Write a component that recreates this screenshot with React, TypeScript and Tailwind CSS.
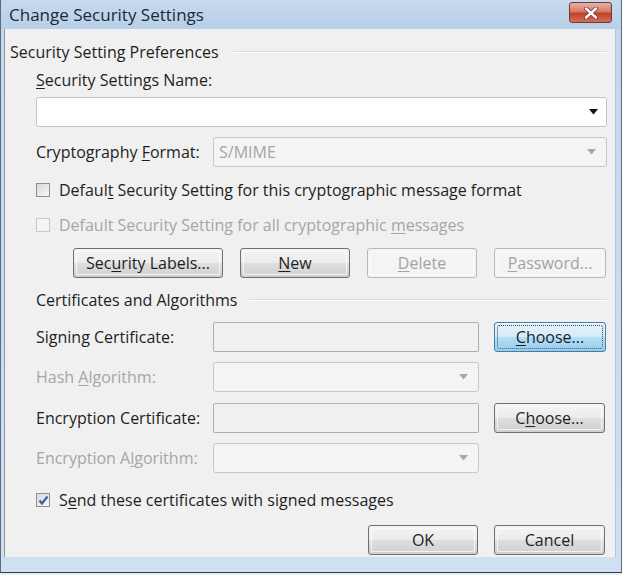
import type { ReactNode } from 'react';

const font = { fontFamily: '"Open Sans", "Noto Sans", "Liberation Sans", sans-serif' };

function U({ children }: { children: ReactNode }) {
    return <span className="underline underline-offset-2 decoration-1">{children}</span>;
}

type BtnKind = 'normal' | 'disabled' | 'focused';

function Btn({ kind = 'normal', w, children }: { kind?: BtnKind; w: string; children: ReactNode }) {
    const look = {
        normal: 'border-[#707070] text-[#1e1e1e] bg-[linear-gradient(to_bottom,#f4f4f4_0%,#ececec_48%,#dedede_52%,#d0d0d0_100%)]',
        disabled: 'border-[#b5b9bc] text-[#a3a3a3] bg-[#f4f4f4]',
        focused: 'border-[#3c7fb1] text-[#1e1e1e] bg-[linear-gradient(to_bottom,#e7f4fc_0%,#d4ecfa_48%,#b3def6_52%,#94cdf0_100%)]',
    }[kind];
    return (
        <div className={`${w} h-[30px] rounded-[3px] border ${look} flex items-center justify-center p-[2px]`}>
            <div className={`w-full h-full flex items-center justify-center rounded-[2px] shadow-[inset_0_0_0_1px_rgba(255,255,255,0.7)] ${kind === 'focused' ? 'outline outline-1 outline-dotted outline-[#333] -outline-offset-1' : ''}`}>
                {children}
            </div>
        </div>
    );
}

function Check({ state }: { state: 'off' | 'disabled' | 'on' }) {
    return (
        <div className={`w-[14px] h-[14px] border ${state === 'disabled' ? 'border-[#c8c8c8] bg-[#f4f4f4]' : 'border-[#8e8f8f] bg-[linear-gradient(135deg,#d8d8d8,#f8f8f8)]'} flex items-center justify-center shrink-0`}>
            {state === 'on' && (
                <svg width="11" height="11" viewBox="0 0 11 11">
                    <path d="M1.5 5.5 L4 8.5 L9.5 1.5" fill="none" stroke="#3b5fa6" strokeWidth="2.2" />
                </svg>
            )}
        </div>
    );
}

function Arrow({ dim }: { dim?: boolean }) {
    return (
        <svg width="9" height="6" viewBox="0 0 9 6" className="shrink-0">
            <path d="M0 0 H9 L4.5 5.5 Z" fill={dim ? '#a8a8a8' : '#111'} />
        </svg>
    );
}

function Select({ w, text }: { w: string; text?: string }) {
    return (
        <div className={`${w} h-[30px] rounded-[3px] border border-[#c7c7c7] bg-[#f4f4f4] flex items-center justify-between pl-[5px] pr-[10px]`}>
            <span className="text-[#a6a6a6]">{text}</span>
            <Arrow dim />
        </div>
    );
}

function Field() {
    return <div className="w-[266px] h-[30px] rounded-[2px] border border-[#abadb3] border-t-[#a3b6cc] bg-[#f0f0f0]" />;
}

function Header({ text, lineFrom }: { text: string; lineFrom: string }) {
    return (
        <div className="h-[20px] flex items-center">
            <span>{text}</span>
            <div className={`${lineFrom} flex-1 border-t border-[#d5dfe5] border-b border-b-white`} />
        </div>
    );
}

export default function App() {
    return (
        <div className="w-[622px] h-[575px] overflow-hidden bg-[#e9eef3] text-[16px] leading-[20px] text-[#1e1e1e]" style={font}>
            <div className="w-[622px] h-[573px] flex flex-col border-l border-r border-[#5d6b79] border-b border-b-[#24403c] bg-[linear-gradient(to_bottom,#c3d7ed,#cfe0f2)]">
                {/* title bar */}
                <div className="h-[29px] flex items-center justify-between pl-[8px] pr-[9px] bg-[linear-gradient(to_bottom,#c6daee,#b8cfe8)]">
                    <span className="text-[17px] text-[#1a2a3a]">Change Security Settings</span>
                    <div className="w-[43px] h-[21px] mt-[-4px] rounded-[3px] border border-[#6b3a36] bg-[linear-gradient(to_bottom,#e7b1a3_0%,#d67a66_45%,#c2432d_55%,#d2705a_100%)] flex items-center justify-center">
                        <svg width="16" height="12" viewBox="0 0 16 12">
                            <path d="M3 1.5 L13 10.5 M13 1.5 L3 10.5" stroke="#6a3a32" strokeWidth="4" strokeLinecap="round" />
                            <path d="M3 1.5 L13 10.5 M13 1.5 L3 10.5" stroke="#ffffff" strokeWidth="2.4" strokeLinecap="round" />
                        </svg>
                    </div>
                </div>

                {/* body */}
                <div className="flex flex-1 pl-[3px] pr-[5px] pb-[15px]">
                    <div className="flex-1 bg-[#f0f0f0] border-l border-[#8b98a6] border-r border-r-[#a9c4e4] flex flex-col pl-[5px] pr-[8px]">
                        <div className="mt-[13px]">
                            <Header text="Security Setting Preferences" lineFrom="ml-[14px]" />
                        </div>

                        <div className="pl-[26px] flex flex-col">
                            <div className="mt-[8px] h-[20px] flex items-center">
                                <span><U>S</U>ecurity Settings Name:</span>
                            </div>
                            <div className="mt-[7px] h-[30px] rounded-[3px] border border-[#c4c4c4] bg-white flex items-center justify-end pr-[8px]">
                                <Arrow />
                            </div>

                            <div className="mt-[10px] h-[30px] flex items-center">
                                <span className="w-[177px]">Cryptography <U>F</U>ormat:</span>
                                <div className="flex-1 h-[30px] rounded-[3px] border border-[#c7c7c7] bg-[#f4f4f4] flex items-center justify-between pl-[5px] pr-[10px]">
                                    <span className="text-[#a6a6a6]">S/MIME</span>
                                    <Arrow dim />
                                </div>
                            </div>

                            <div className="mt-[13px] h-[20px] flex items-center gap-[9px]">
                                <Check state="off" />
                                <span>Defaul<U>t</U> Security Setting for this cryptographic message format</span>
                            </div>
                            <div className="mt-[15px] h-[20px] flex items-center gap-[9px] text-[#a6a6a6]">
                                <Check state="disabled" />
                                <span>Default Security Setting for all cryptographic <U>m</U>essages</span>
                            </div>

                            <div className="mt-[13px] flex items-center pl-[37px] gap-[17px]">
                                <Btn w="w-[150px]">Sec<U>u</U>rity Labels...</Btn>
                                <Btn w="w-[110px]"><U>N</U>ew</Btn>
                                <Btn kind="disabled" w="w-[110px]"><U>D</U>elete</Btn>
                                <Btn kind="disabled" w="w-[112px]"><U>P</U>assword...</Btn>
                            </div>
                        </div>

                        <div className="mt-[12px] pl-[26px]">
                            <Header text="Certificates and Algorithms" lineFrom="ml-[12px]" />
                        </div>

                        <div className="pl-[26px] flex flex-col">
                            <div className="mt-[12px] h-[30px] flex items-center">
                                <span className="w-[177px]">Signing Certificate:</span>
                                <Field />
                                <div className="ml-[15px]">
                                    <Btn kind="focused" w="w-[112px]"><U>C</U>hoose...</Btn>
                                </div>
                            </div>
                            <div className="mt-[10px] h-[30px] flex items-center">
                                <span className="w-[177px] text-[#a6a6a6]">Hash <U>A</U>lgorithm:</span>
                                <Select w="w-[266px]" />
                            </div>
                            <div className="mt-[11px] h-[30px] flex items-center">
                                <span className="w-[177px]">Encryption Certificate:</span>
                                <Field />
                                <div className="ml-[15px]">
                                    <Btn w="w-[111px]">C<U>h</U>oose...</Btn>
                                </div>
                            </div>
                            <div className="mt-[10px] h-[30px] flex items-center">
                                <span className="w-[177px] text-[#a6a6a6]">Encryption A<U>l</U>gorithm:</span>
                                <Select w="w-[266px]" />
                            </div>

                            <div className="mt-[17px] h-[20px] flex items-center gap-[9px]">
                                <Check state="on" />
                                <span>S<U>e</U>nd these certificates with signed messages</span>
                            </div>

                            <div className="mt-[15px] flex justify-end gap-[16px] pr-[2px]">
                                <Btn w="w-[110px]">OK</Btn>
                                <Btn w="w-[111px]">Cancel</Btn>
                            </div>
                        </div>
                    </div>
                </div>
            </div>
        </div>
    );
}
